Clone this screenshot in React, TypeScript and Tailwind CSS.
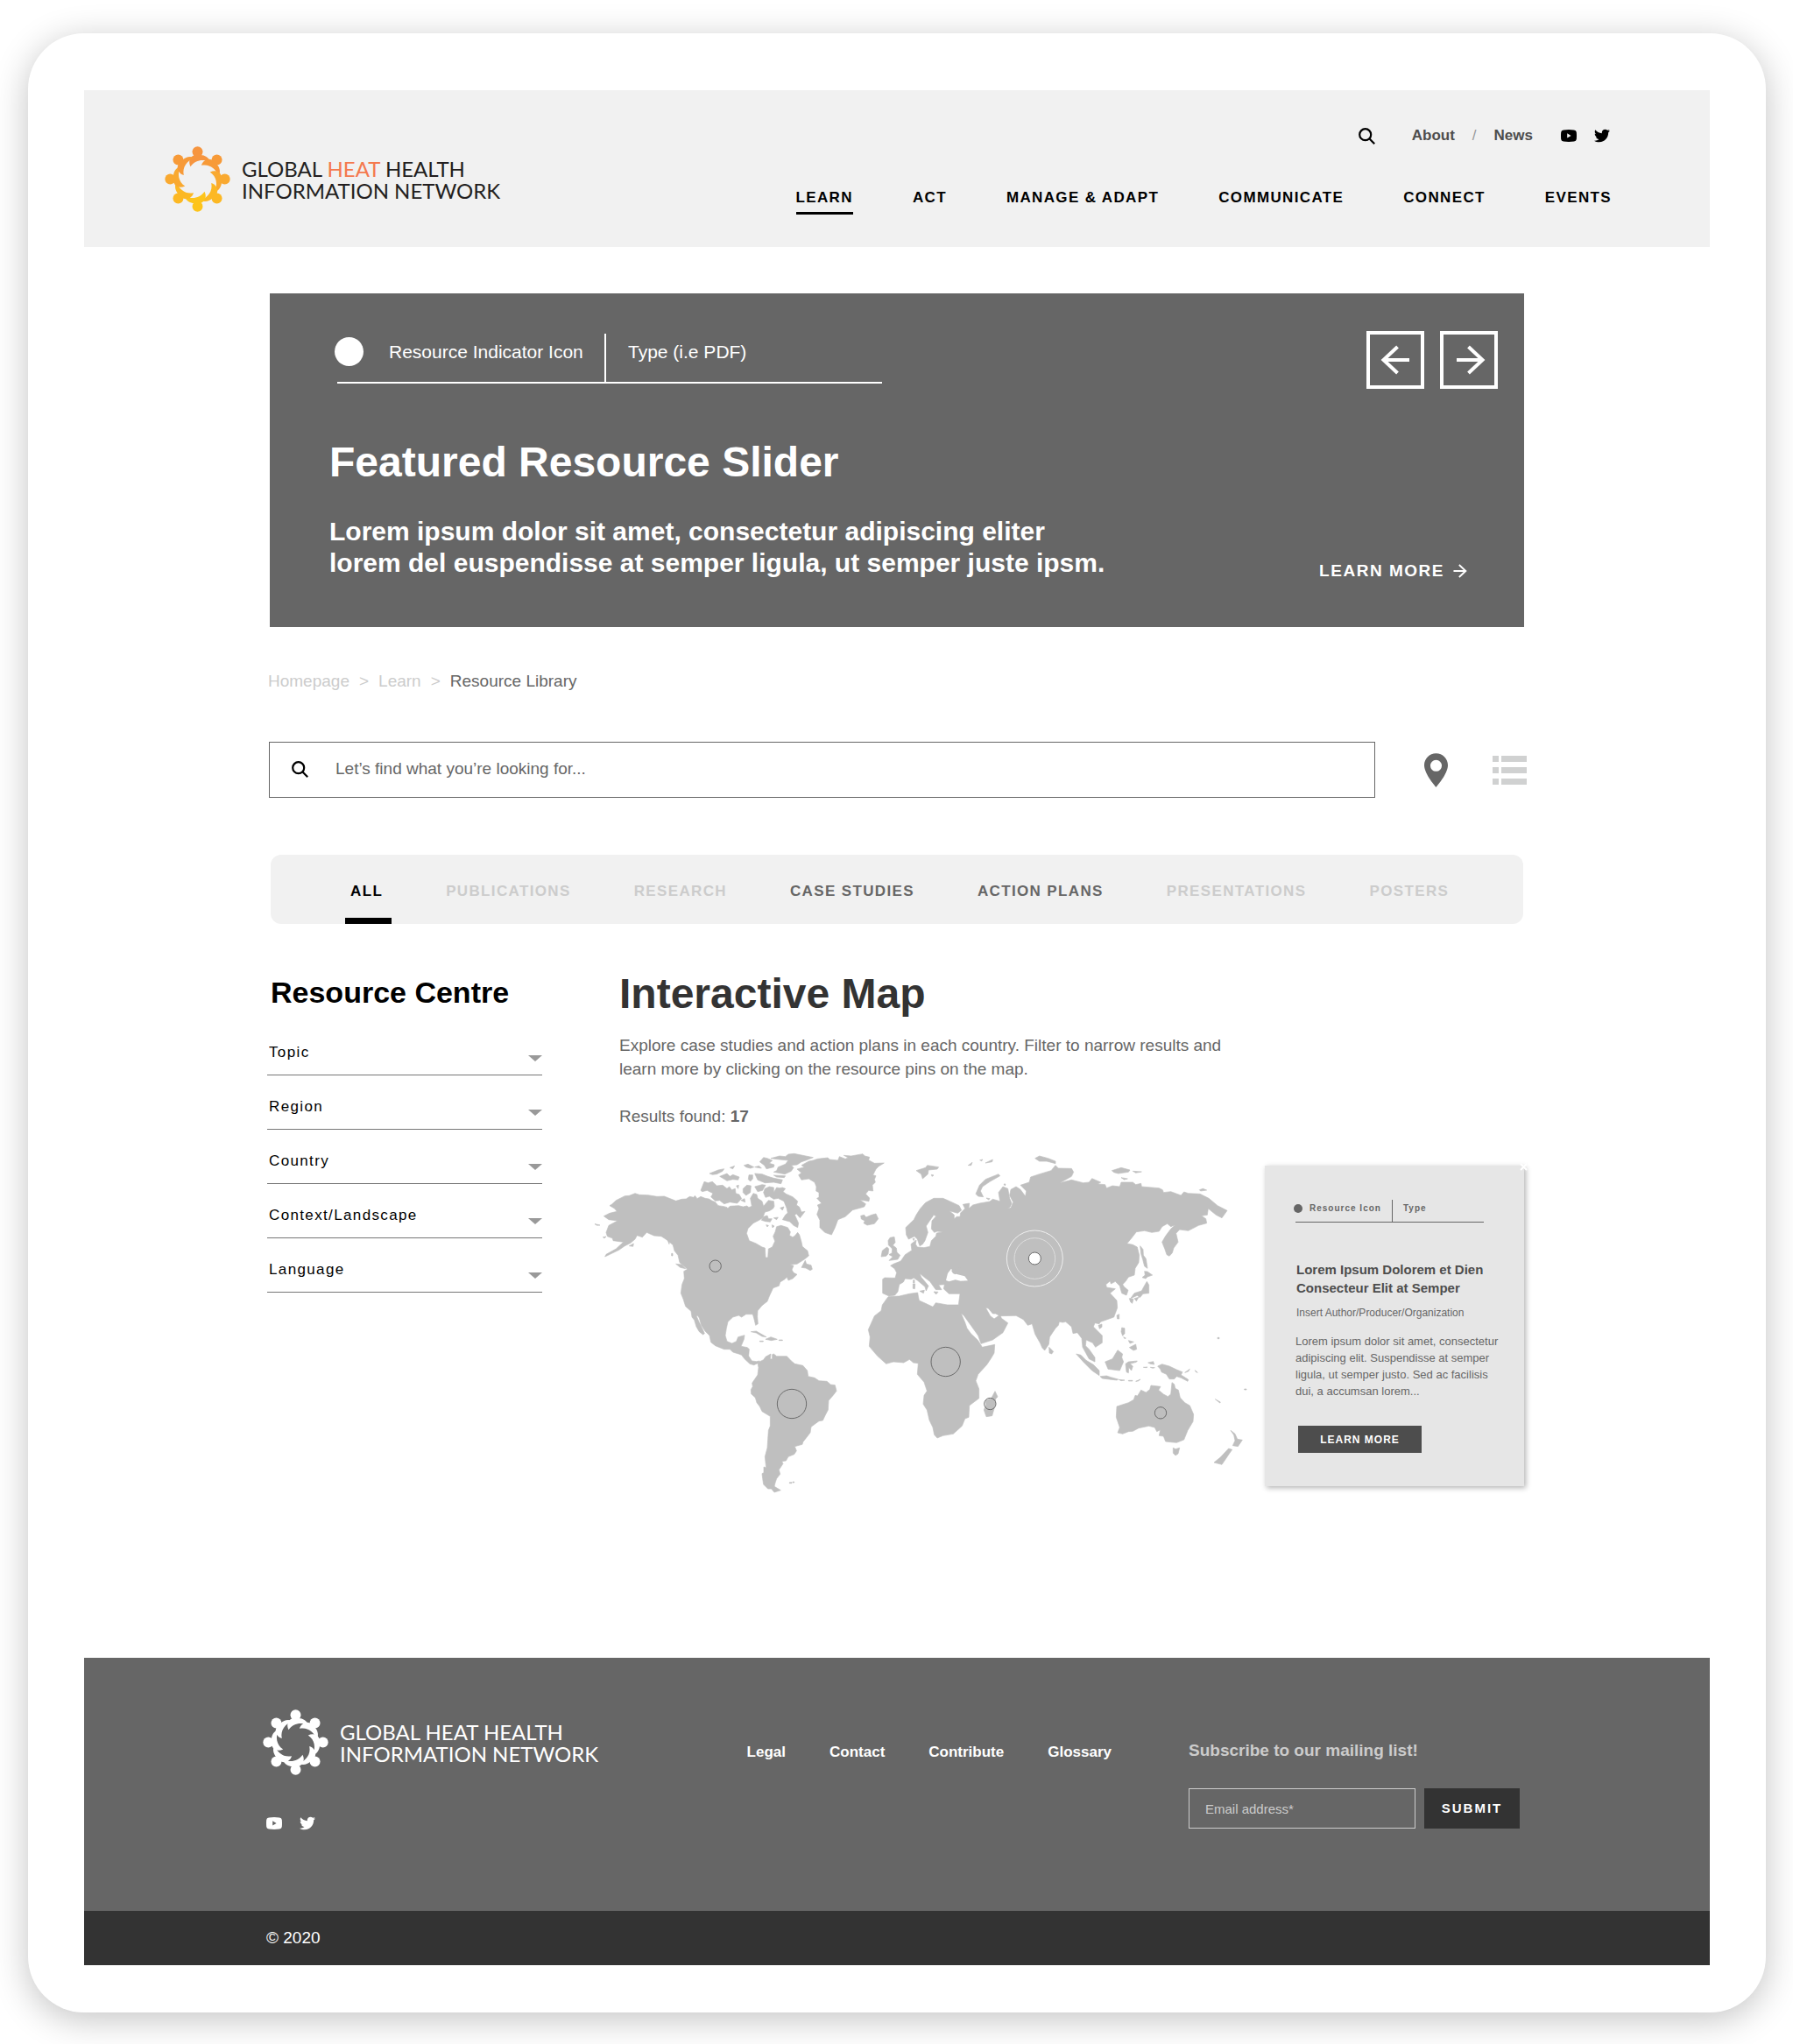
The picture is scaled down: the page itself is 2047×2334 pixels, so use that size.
import { FaTwitter } from 'react-icons/fa';

interface NavItem {
  label: string;
  active?: boolean;
}

interface Tab {
  label: string;
  tone: string;
  active?: boolean;
}

const NAV_ITEMS: NavItem[] = [
  { label: 'LEARN', active: true },
  { label: 'ACT' },
  { label: 'MANAGE & ADAPT' },
  { label: 'COMMUNICATE' },
  { label: 'CONNECT' },
  { label: 'EVENTS' },
];

const TABS: Tab[] = [
  { label: 'ALL', tone: 'text-black', active: true },
  { label: 'PUBLICATIONS', tone: 'text-[#cccccc]' },
  { label: 'RESEARCH', tone: 'text-[#cccccc]' },
  { label: 'CASE STUDIES', tone: 'text-[#666666]' },
  { label: 'ACTION PLANS', tone: 'text-[#666666]' },
  { label: 'PRESENTATIONS', tone: 'text-[#cccccc]' },
  { label: 'POSTERS', tone: 'text-[#cccccc]' },
];

const FILTERS = ['Topic', 'Region', 'Country', 'Context/Landscape', 'Language'];

const FOOTER_LINKS = ['Legal', 'Contact', 'Contribute', 'Glossary'];

// One colour per figure, clockwise from the top
const FIGURE_COLORS = ['#f6953f', '#f79a38', '#f9a930', '#fcb824', '#fdc41a', '#fcb824', '#f9a930', '#f79a38'];

const LogoMark = ({ mono }: { mono?: boolean }) => (
  <svg viewBox="-113 -113 226 226" className="size-[75px] shrink-0" aria-hidden="true">
    {FIGURE_COLORS.map((color, i) => (
      <g key={i} transform={`rotate(${i * 45})`} fill={mono ? '#ffffff' : color}>
        <circle cx="0" cy="-94" r="18" />
        <path d="M-24 -43C-32 -58 -28 -76 -12 -82L-9 -88H9L12 -83C24 -82 38 -76 44 -60C18 -69 -8 -67 -24 -43Z" />
      </g>
    ))}
  </svg>
);

const Logo = ({ mono }: { mono?: boolean }) => (
  <a href="#" className="flex items-center gap-[13px]">
    <LogoMark mono={mono} />
    <span
      className={`font-[Lato,sans-serif] text-2xl leading-[25px] whitespace-nowrap ${mono ? 'text-white' : 'text-[#231f20]'}`}
    >
      GLOBAL <span className={mono ? 'text-white' : 'text-[#f4794e]'}>HEAT</span> HEALTH
      <br />
      INFORMATION NETWORK
    </span>
  </a>
);

const SearchIcon = () => (
  <svg viewBox="0 0 19 19" className="size-[19px] shrink-0" fill="none" stroke="#000000" strokeWidth="2.2" aria-hidden="true">
    <circle cx="7.7" cy="7.7" r="6.5" />
    <path d="M12.3 12.3L18.2 18.2" />
  </svg>
);

const YoutubeIcon = () => (
  <svg viewBox="0 0 18 14" className="h-[14px] w-[18px]" fill="currentColor" aria-hidden="true">
    <path
      fillRule="evenodd"
      d="M3 .4Q9 -.3 15 .4Q17.600 .6 17.800 3Q18.200 7 17.800 11Q17.600 13.400 15 13.600Q9 14.300 3 13.600Q.4 13.400 .2 11Q-.2 7 .2 3Q.4 .6 3 .4ZM7.200 4.200V9.600L11.600 6.900Z"
    />
  </svg>
);

const ArrowIcon = ({ className }: { className?: string }) => (
  <svg viewBox="0 0 34 34" className={className} fill="none" stroke="currentColor" strokeWidth="4" aria-hidden="true">
    <path d="M14.500 2L30.500 17L14.500 32M30 17H1" />
  </svg>
);

const PinIcon = () => (
  <svg viewBox="5 2 14 20" className="h-[39px] w-[27px]" fill="#666666" aria-hidden="true">
    <path
      fillRule="evenodd"
      d="M12 2C8.130 2 5 5.130 5 9c0 5.250 7 13 7 13s7-7.750 7-13c0-3.870-3.130-7-7-7zM12 5.900a3.400 3.400 0 1 1 0 6.800a3.400 3.400 0 1 1 0-6.800z"
    />
  </svg>
);

const ListIcon = () => (
  <svg viewBox="0 0 39 33" className="h-[33px] w-[39px]" fill="#d0d1d1" aria-hidden="true">
    <path d="M0 0h7v7H0zM10 0h29v7H10zM0 13h7v7H0zM10 13h29v7H10zM0 26h7v7H0zM10 26h29v7H10z" />
  </svg>
);

const WorldMap = () => (
  <svg viewBox="27 48 2235 1170" className="min-w-0 flex-1 self-start" role="img" aria-label="World map of resources">
    <g fill="#bfbfbf" stroke="#bfbfbf" strokeWidth="2" strokeLinejoin="round">
      {/* North America */}
      <path d="M78 230L85 226L100 212L130 197L145 196L165 188L180 193L210 194L240 199L265 198L290 208L305 214L325 208L340 207L352 199L366 202L370 196L378 206L390 199L405 205L418 207L428 213L440 218L450 230L470 233L480 236L482 240L490 232L520 230L535 234L548 231L555 236L565 232L560 205L570 188L582 192L585 205L600 215L605 232L622 212L640 215L642 232L638 240L625 248L610 252L602 272L590 280L570 290L552 308L547 325L556 350L580 360L600 372L610 375L612 408L620 408L622 378L635 372L644 352L638 335L645 320L650 302L665 298L688 305L697 320L694 332L705 338L712 334L722 322L728 330L735 355L738 370L756 385L760 402L745 414L720 430L695 432L708 436L702 450L708 460L720 466L705 480L690 486L685 475L678 482L662 492L658 505L638 512L625 540L618 558L600 572L585 590L584 610L586 635L578 640L572 615L568 602L545 602L530 612L520 606L500 612L483 628L478 650L474 675L480 695L497 702L512 695L518 680L540 674L538 688L528 712L550 716L556 722L554 745L565 762L580 764L592 762L585 770L572 776L558 772L540 755L530 742L520 738L500 732L490 722L470 722L440 710L425 698L420 675L405 660L392 640L385 615L378 605L376 610L385 630L395 650L403 668L398 672L385 662L375 645L368 622L360 612L357 592L338 575L330 550L322 530L326 500L334 480L332 455L344 448L330 435L318 425L312 400L300 385L295 365L278 350L255 335L230 333L205 322L190 338L172 332L165 345L150 358L130 368L110 382L62 405L66 397L100 378L125 355L90 350L88 342L70 335L66 322L75 298L105 282L75 278L58 266L78 256L103 250L95 240Z" />
      <path d="M395 182L390 178L402 148L415 152L430 148L445 162L465 160L480 172L488 165L496 176L508 172L510 188L522 192L530 206L515 222L490 218L470 224L455 212L440 214L425 200L432 188L412 178Z" />
      <path d="M535 172L548 160L562 162L560 185L545 195L535 185ZM512 162L520 160L518 172ZM575 165L600 158L612 160L602 178L585 182ZM528 212L540 206L542 218Z" />
      <path d="M605 185L610 172L625 165L640 168L640 185L650 168L660 170L670 168L680 172L672 182L682 190L705 200L722 215L718 228L728 235L735 252L747 250L738 262L730 272L718 258L712 262L725 290L722 305L708 298L695 285L670 278L680 262L688 255L684 238L675 215L655 205L640 208L625 198L612 202Z" />
      <path d="M598 280L605 268L618 264L622 275L634 275L628 286L612 284ZM662 238L675 234L670 246ZM640 272L655 270L650 278ZM614 296L622 298L618 303ZM634 296L642 300L636 306Z" />
      <path d="M420 120L450 108L470 104L465 112L445 122L430 124ZM455 130L480 120L490 130L500 124L522 132L518 142L500 140L480 145ZM490 100L506 94L500 104ZM538 92L552 88L572 98L560 102L545 98ZM555 125L568 125L568 138L560 147L553 140ZM575 120L600 122L620 130L640 136L670 142L665 155L640 150L610 152L585 142Z" />
      <path d="M592 80L605 65L618 68L635 75L625 85L642 90L640 98L615 104L608 92ZM630 68L660 60L680 62L690 54L710 52L775 65L750 75L735 80L720 90L700 92L708 100L700 112L678 122L640 115L650 110L655 98L680 88L690 75L660 72ZM640 126L680 128L676 134L650 132ZM575 98L590 94L598 102Z" />
      {/* Greenland and Iceland */}
      <path d="M720 105L745 98L735 92L760 78L775 75L790 70L825 66L832 72L860 75L865 62L885 70L895 66L880 58L905 60L945 53L952 60L968 64L965 74L985 85L1018 84L1000 95L990 105L980 125L990 128L985 140L988 150L978 160L980 180L965 178L955 190L968 204L966 215L935 210L955 224L950 234L910 245L885 268L860 278L850 305L838 330L815 322L798 305L798 280L788 260L795 240L790 228L804 222L788 205L795 202L795 185L785 180L786 165L780 150L760 138L735 142L725 125L735 118Z" />
      <path d="M938 265L950 262L956 270L975 262L990 258L998 275L985 292L960 297L948 290L952 282L940 276Z" />
      {/* Small islands of the west */}
      <path d="M735 442L748 418L752 430L768 434L772 448L765 452L750 444ZM562 662L580 660L615 680L600 678L580 666ZM612 688L630 680L652 688L632 692ZM658 690h12v2h-12ZM592 694h12v2h-12ZM305 430L325 432L338 446L320 442ZM275 345L283 352L282 362ZM25 292L45 297L35 298ZM145 368L160 360L158 370ZM55 338L66 336L60 342ZM290 394h4v8h-4ZM694 1178h8v3h-8ZM705 1176h5v3h-5Z" />
      {/* South America */}
      <path d="M585 768L605 758L612 748L630 738L628 755L635 756L635 740L640 738L650 746L685 746L700 762L712 772L740 778L755 795L758 815L780 820L795 830L822 832L835 843L850 845L855 865L845 878L828 898L826 930L818 945L808 966L795 968L768 988L765 1008L740 1040L738 1048L712 1055L718 1070L710 1082L690 1090L682 1104L668 1106L672 1114L658 1135L662 1150L650 1165L645 1180L642 1192L664 1205L642 1212L632 1200L620 1200L605 1185L602 1165L600 1148L606 1145L606 1125L614 1128L610 1090L618 1060L622 1000L628 985L628 952L600 935L592 918L582 905L577 888L563 875L562 860L568 850L566 838L585 810L588 785Z" />
    </g>

    <g transform="translate(870 0)">
      <g fill="#bfbfbf" stroke="#bfbfbf" strokeWidth="2" strokeLinejoin="round">
        {/* Europe and Asia */}
        <path d="M143 482L150 477L186 478L191 460L184 446L170 436L180 430L205 420L220 398L243 383L240 362L258 348L256 362L262 372L285 374L305 370L310 350L325 335L328 324L350 320L330 318L320 322L310 310L312 282L326 266L318 262L300 288L292 300L298 322L288 350L280 362L270 368L262 345L252 335L232 345L224 330L222 305L250 278L258 262L272 240L290 220L318 205L350 205L375 216L405 230L413 246L400 256L372 248L388 262L388 276L396 268L408 268L410 255L425 240L418 226L440 222L438 240L452 228L475 222L510 216L520 208L545 215L540 185L555 165L572 172L578 205L585 222L580 234L572 240L582 238L590 218L578 195L582 175L600 165L615 175L632 198L635 180L615 160L645 150L650 132L680 122L720 110L735 92L745 102L790 103L797 115L790 130L750 152L790 142L830 152L850 150L860 137L890 150L880 156L905 158L910 170L930 162L955 165L960 150L1000 150L1010 158L1028 154L1030 165L1090 170L1102 176L1105 185L1130 182L1165 195L1175 183L1190 188L1230 190L1260 205L1290 230L1323 247L1305 272L1285 262L1258 240L1255 262L1235 265L1250 275L1253 290L1225 298L1190 316L1160 312L1148 325L1155 355L1140 375L1135 392L1125 403L1116 398L1110 380L1100 355L1112 334L1130 310L1145 296L1130 302L1118 292L1100 302L1090 318L1065 322L1040 316L1012 320L995 342L980 360L1000 364L1015 372L1022 400L1020 425L1008 445L1005 468L985 475L975 490L965 500L970 508L984 520L978 537L962 530L955 505L940 490L925 498L922 488L908 500L910 510L940 515L922 530L945 555L947 580L935 612L890 628L885 635L870 632L865 645L895 675L895 700L872 715L862 700L840 690L838 710L850 722L870 750L870 765L850 755L828 715L825 685L810 665L795 668L790 645L770 628L760 630L748 628L745 640L735 650L715 680L712 705L698 726L690 718L682 700L665 670L655 635L640 640L625 620L600 607L545 608L530 600L520 600L505 582L496 580L512 608L525 618L545 604L550 616L572 632L555 665L520 690L480 703L470 675L445 640L420 605L405 595L403 570L408 532L370 532L352 515L355 500L335 502L345 518L325 518L305 490L285 475L270 462L275 475L300 505L292 522L288 508L262 486L250 478L240 482L220 480L214 492L200 500L195 525L185 537L165 540L143 530Z" />
        {/* Africa */}
        <path d="M162 542L200 540L235 532L263 528L265 540L268 555L290 565L315 577L325 563L365 570L403 570L410 595L425 630L432 650L445 668L470 692L484 715L527 706L525 735L515 752L500 775L470 808L462 830L473 858L473 890L440 915L438 955L425 960L415 985L385 1012L350 1018L330 1026L320 1015L315 990L303 965L295 930L282 910L285 880L295 865L285 835L262 808L265 770L248 768L235 757L215 768L180 765L155 772L125 745L97 712L100 680L94 655L115 608L138 590L142 570Z" />
        <path d="M528 866L537 885L530 892L528 915L518 950L498 953L490 930L497 912L495 898L515 890Z" />
        {/* Islands of Europe and the Arctic */}
        <path d="M162 350L168 340L183 337L186 356L178 366L190 375L192 390L203 400L195 414L165 418L178 405L165 398L175 392L176 378L163 365ZM138 405L142 384L158 372L164 378L162 395L155 403Z" />
        <path d="M258 110L290 100L296 92L335 98L330 105L300 108L298 122L280 138L275 122ZM310 124L318 126L312 130ZM462 190L475 160L495 140L540 122L545 128L510 148L485 165L478 180L488 200L470 198ZM436 92L450 82L446 92ZM476 74L486 72L482 77ZM495 84L520 72L518 80ZM665 68L680 60L710 68L735 78L735 86L705 78L680 78ZM928 110L960 100L990 108L985 115L950 120L935 116ZM1000 112L1030 114L1010 118ZM960 134L982 138L970 141ZM1228 176L1240 172L1253 177L1232 180ZM498 204L510 206L506 210ZM558 156L564 156L562 162Z" />
        <path d="M248 485h4v10h-4ZM247 498L254 498L253 515L247 514ZM270 523L286 520L283 530ZM318 525L333 526L326 534ZM246 344L252 342L250 350Z" />
        {/* East Asia */}
        <path d="M1025 368L1035 380L1036 400L1045 412L1050 445L1040 438L1034 415L1028 395ZM1040 455L1050 456L1067 468L1050 474L1044 480L1032 476L1042 468ZM1048 490L1055 502L1055 530L1035 532L1024 545L1015 538L992 548L1005 530L1030 522L1042 500ZM988 548L1002 550L998 565L992 560ZM1005 548L1020 544L1012 557ZM945 606L953 602L953 618L947 618ZM882 640L894 636L894 646L886 652ZM713 715L728 730L722 738L714 735Z" />
        <path d="M962 648L972 650L972 668L965 676L960 662ZM968 680L976 684L972 686ZM985 692L1003 697L990 702ZM988 716L1010 705L1013 722L1002 726ZM905 765L930 755L948 725L965 738L962 750L968 765L955 795L915 790ZM806 738L822 742L840 760L865 775L885 795L885 812L860 795L830 765ZM888 815L910 813L925 818L950 825L945 828L895 822ZM952 826L972 828L960 830ZM985 829h14v2h-14ZM1010 832L1026 825L1018 831ZM975 772L985 765L1015 762L1012 766L990 772L1000 780L995 795L986 784L985 803L978 800Z" />
        {/* Oceania */}
        <path d="M1052 768L1070 764L1073 774L1060 772ZM1036 784L1050 783L1046 785ZM1060 784L1075 785L1068 787ZM1085 780L1100 773L1125 780L1150 792L1170 800L1165 810L1190 826L1188 832L1165 820L1150 815L1142 824L1125 824L1115 808L1098 800L1094 790ZM1178 802L1195 790L1190 798ZM1213 794L1222 802L1216 800ZM1282 893L1300 903L1298 906ZM1290 682h6v4h-6ZM1382 858h7v3h-7Z" />
        <path d="M945 918L985 905L1003 895L1008 880L1016 882L1028 862L1045 870L1058 860L1062 846L1095 850L1088 862L1105 876L1120 884L1130 876L1134 836L1142 842L1145 856L1156 862L1162 888L1178 905L1195 915L1208 945L1206 970L1188 1000L1175 1032L1150 1042L1130 1040L1112 1038L1105 1020L1090 1018L1094 998L1082 1004L1075 990L1055 985L1020 992L1000 1003L985 1004L965 1012L948 1008L955 990L950 975L943 955ZM1138 1060L1146 1064L1160 1060L1155 1080L1146 1086L1138 1078ZM1335 1000L1350 1012L1358 1030L1375 1033L1360 1055L1342 1052L1350 1035L1346 1016ZM1328 1062L1340 1066L1330 1080L1320 1095L1305 1117L1278 1110L1300 1092Z" />
      </g>
      {/* Black Sea */}
      <path fill="#ffffff" d="M360 486L366 462L378 446L388 462L400 466L424 472L435 487L410 488L392 484L370 490Z" />
      <path fill="#bfbfbf" d="M378 452L398 446L408 440L412 452L400 458L392 466L384 462Z" />
    </g>

    {/* Resource pins */}
    <g fill="none" stroke="#6b6b6b" strokeWidth="3">
      <circle cx="440" cy="437" r="20" />
      <circle cx="702" cy="909" r="50" />
      <circle cx="1229" cy="765" r="50" />
      <circle cx="1381" cy="909" r="20" />
      <circle cx="1965" cy="940" r="20" />
      <circle cx="1534" cy="411" r="96" stroke="#f0f0f0" />
      <circle cx="1534" cy="411" r="70" stroke="#dedede" />
      <circle cx="1534" cy="411" r="21" fill="#ffffff" />
    </g>
  </svg>
);

const Header = () => (
  <header className="flex h-[179px] items-start justify-between bg-[#f1f1f1] pr-28 pl-[92px]">
    <div className="pt-16">
      <Logo />
    </div>
    <div className="flex flex-col items-end pt-10">
      <div className="flex h-6 items-center text-[17px] leading-6 font-bold text-[#4d4d4d]">
        <button type="button" aria-label="Search">
          <SearchIcon />
        </button>
        <a href="#" className="ml-[42px]">About</a>
        <span className="mx-5 font-normal text-[#999999]">/</span>
        <a href="#">News</a>
        <a href="#" aria-label="YouTube" className="ml-8 text-black">
          <YoutubeIcon />
        </a>
        <a href="#" aria-label="Twitter" className="mr-0.5 ml-5 text-black">
          <FaTwitter size={18} />
        </a>
      </div>
      <nav className="mt-[47px] flex gap-[68px] text-[17px] leading-6 font-bold tracking-[0.08em] text-black">
        {NAV_ITEMS.map(item => (
          <a key={item.label} href="#" className={item.active ? 'border-b-[3px] border-black pb-1' : ''}>
            {item.label}
          </a>
        ))}
      </nav>
    </div>
  </header>
);

const FeaturedSlider = () => (
  <section className="mt-[53px] flex justify-between bg-[#666666] text-white">
    <div className="pt-[46px] pb-[55px] pl-[68px]">
      <div className="ml-[9px] flex h-[57px] w-[622px] border-b-2 border-white text-[21px] leading-6">
        <div className="flex w-[307px] items-center border-r-2 border-white pb-[15px]">
          <span className="-ml-[3px] size-[33px] rounded-full bg-white" />
          <span className="ml-[29px] pt-0.5">Resource Indicator Icon</span>
        </div>
        <div className="flex items-center pb-[13px] pl-[25px]">Type (i.e PDF)</div>
      </div>
      <h2 className="mt-[62px] text-5xl leading-[56px] font-bold">Featured Resource Slider</h2>
      <p className="mt-[33px] text-[30px] leading-9 font-bold">
        Lorem ipsum dolor sit amet, consectetur adipiscing eliter
        <br />
        lorem del euspendisse at semper ligula, ut semper juste ipsm.
      </p>
    </div>
    <div className="flex flex-col items-end justify-between pt-[43px] pb-[52px]">
      <div className="mr-[30px] flex gap-[18px]">
        <button type="button" aria-label="Previous" className="flex size-[66px] items-center justify-center border-4 border-white">
          <ArrowIcon className="size-[34px] rotate-180" />
        </button>
        <button type="button" aria-label="Next" className="flex size-[66px] items-center justify-center border-4 border-white pl-1">
          <ArrowIcon className="size-[34px]" />
        </button>
      </div>
      <a href="#" className="mr-[65px] flex items-center gap-[10px] text-[19px] leading-6 font-bold tracking-[0.08em]">
        LEARN MORE
        <ArrowIcon className="size-4" />
      </a>
    </div>
  </section>
);

const Breadcrumb = () => (
  <nav aria-label="Breadcrumb" className="mt-[50px] -ml-0.5 flex gap-[11px] text-[19px] leading-6 text-[#cccccc]">
    <a href="#">Homepage</a>
    <span>&gt;</span>
    <a href="#">Learn</a>
    <span>&gt;</span>
    <span className="text-[#666666]">Resource Library</span>
  </nav>
);

const SearchBar = () => (
  <div className="mt-[57px] -ml-px flex items-center">
    <label className="flex h-16 flex-1 items-center border border-[#666666] pb-0.5 pl-[25px]">
      <SearchIcon />
      <input
        type="search"
        aria-label="Search resources"
        placeholder="Let’s find what you’re looking for..."
        className="ml-[31px] min-w-0 flex-1 text-[19px] leading-6 outline-none placeholder:text-[#666666]"
      />
    </label>
    <button type="button" aria-label="Map view" className="ml-14">
      <PinIcon />
    </button>
    <button type="button" aria-label="List view" className="-mr-[3px] ml-[51px]">
      <ListIcon />
    </button>
  </div>
);

const ResourceTabs = () => (
  <div className="mx-px mt-[65px] flex h-[79px] gap-[72px] rounded-xl bg-[#f1f1f1] pl-[91px] text-[17px] font-bold">
    {TABS.map(tab => (
      <button key={tab.label} type="button" className={`relative pt-1 tracking-[0.08em] ${tab.tone}`}>
        {tab.label}
        {tab.active && <span className="absolute -right-2.5 bottom-0 -left-1.5 h-[7px] bg-black" />}
      </button>
    ))}
  </div>
);

const Filters = () => (
  <aside className="-ml-[3px] w-[314px] shrink-0 pt-1.5">
    <h2 className="pl-1 text-[34px] leading-10 font-bold text-black">Resource Centre</h2>
    <div className="mt-[13px]">
      {FILTERS.map(filter => (
        <div key={filter} className="relative">
          <select
            aria-label={filter}
            className="block h-[62px] w-full appearance-none border-b border-[#777777] bg-transparent pt-6 pb-[13px] pl-0.5 text-[17px] leading-6 tracking-[0.08em] text-black outline-none"
          >
            <option>{filter}</option>
          </select>
          <svg viewBox="0 0 16 7" className="pointer-events-none absolute right-0 bottom-4 h-[7px] w-4" fill="#999999" aria-hidden="true">
            <path d="M0 0H16L8 7Z" />
          </svg>
        </div>
      ))}
    </div>
  </aside>
);

const ResourceCard = () => (
  <article className="relative mt-[15px] ml-5 w-[296px] shrink-0 self-start bg-[#e6e6e6] pt-[39px] pr-6 pb-[38px] pl-[35px] shadow-[2px_2px_6px_rgba(0,0,0,0.3)]">
    <button type="button" aria-label="Close" className="absolute -top-[3px] -right-1">
      <svg viewBox="0 0 9 9" className="size-[9px]" stroke="#ffffff" strokeWidth="2" aria-hidden="true">
        <path d="M1 1L8 8M8 1L1 8" />
      </svg>
    </button>
    <div className="flex h-[26px] w-[215px] border-b border-[#666666] text-[10px] leading-4 font-bold tracking-[1px] text-[#666666]">
      <div className="flex w-[111px] items-center border-r border-[#666666] pb-[5px]">
        <span className="-ml-0.5 size-[10px] rounded-full bg-[#666666]" />
        <span className="ml-2">Resource Icon</span>
      </div>
      <div className="flex items-center pb-[5px] pl-3">Type</div>
    </div>
    <h3 className="mt-[43px] pl-px text-[15px] leading-[21px] font-bold text-[#4d4d4d]">
      Lorem Ipsum Dolorem et Dien
      <br />
      Consecteur Elit at Semper
    </h3>
    <p className="mt-[10px] pl-px text-xs leading-4 text-[#666666]">Insert Author/Producer/Organization</p>
    <p className="mt-[15px] text-[13px] leading-[19px] text-[#666666]">
      Lorem ipsum dolor sit amet, consectetur adipiscing elit. Suspendisse at semper ligula, ut semper justo. Sed ac facilisis dui, a
      accumsan lorem...
    </p>
    <button type="button" className="mt-[30px] ml-[3px] block h-[31px] w-[141px] bg-[#4d4d4d] text-xs font-bold tracking-[1px] text-white">
      LEARN MORE
    </button>
  </article>
);

const Footer = () => (
  <footer>
    <div className="bg-[#666666] pt-[59px] pb-[91px] text-white">
      <div className="mx-auto flex max-w-[1440px] items-start">
        <div>
          <div className="-ml-1">
            <Logo mono />
          </div>
          <div className="mt-[46px] flex h-[18px] items-center gap-5">
            <a href="#" aria-label="YouTube">
              <YoutubeIcon />
            </a>
            <a href="#" aria-label="Twitter">
              <FaTwitter size={18} />
            </a>
          </div>
        </div>
        <nav className="mt-[37px] ml-auto flex gap-[50px] text-[17px] leading-6 font-bold">
          {FOOTER_LINKS.map(link => (
            <a key={link} href="#">{link}</a>
          ))}
        </nav>
        <form className="mt-[35px] mr-[9px] ml-[88px]">
          <label htmlFor="email" className="block text-[19px] leading-6 font-bold text-[#cccccc]">
            Subscribe to our mailing list!
          </label>
          <div className="mt-[31px] flex gap-[10px]">
            <input
              id="email"
              type="email"
              placeholder="Email address*"
              className="h-[46px] w-[259px] border border-[#cccccc] pl-[18px] text-[15px] outline-none placeholder:text-[#cccccc]"
            />
            <button type="submit" className="h-[46px] w-[109px] bg-[#333333] text-[15px] font-bold tracking-[2px]">
              SUBMIT
            </button>
          </div>
        </form>
      </div>
    </div>
    <div className="bg-[#333333] text-white">
      <p className="mx-auto max-w-[1440px] py-[19px] text-[19px] leading-6">© 2020</p>
    </div>
  </footer>
);

const App = () => {
  return (
    <div className="bg-white pt-[38px] pr-[31px] pb-9 pl-8 font-['Liberation_Sans',Arial,sans-serif]">
      <div className="rounded-[64px] bg-white px-16 pt-[65px] pb-[54px] shadow-[0_8px_40px_rgba(0,0,0,0.24)]">
        <Header />
        <main className="mx-auto max-w-[1432px] pb-[187px]">
          <FeaturedSlider />
          <Breadcrumb />
          <SearchBar />
          <ResourceTabs />
          <div className="mt-[52px] flex gap-[60px]">
            <Filters />
            <section className="min-w-0 flex-1">
              <div className="pl-7 text-[19px] leading-[27px] text-[#666666]">
                <h1 className="text-5xl leading-[56px] font-bold text-[#333333]">Interactive Map</h1>
                <p className="mt-[17px] max-w-[720px]">
                  Explore case studies and action plans in each country. Filter to narrow results and learn more by clicking on the
                  resource pins on the map.
                </p>
                <p className="mt-[27px]">
                  Results found: <strong>17</strong>
                </p>
              </div>
              <div className="mt-7 flex">
                <WorldMap />
                <ResourceCard />
              </div>
            </section>
          </div>
        </main>
        <Footer />
      </div>
    </div>
  );
};

export default App;
